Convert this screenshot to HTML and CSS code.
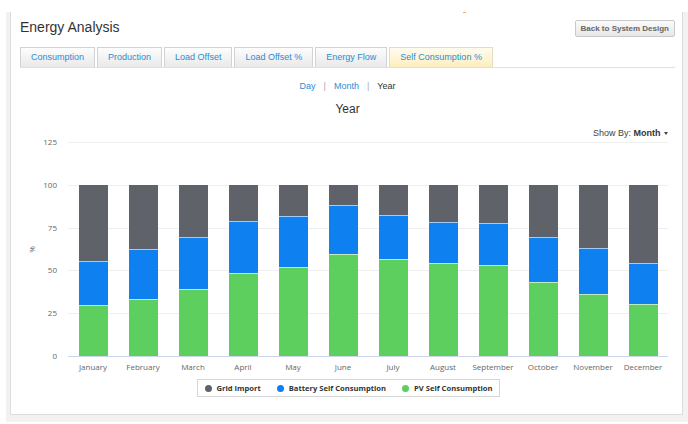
FILE: index.html
```html
<!DOCTYPE html>
<html>
<head>
<meta charset="utf-8">
<title>Energy Analysis</title>
<link rel="stylesheet" href="styles.css">
</head>
<body>
<div class="outer">
  <div class="panel">
    <span class="mark"></span>
    <div class="header">
      <h1 class="title">Energy Analysis</h1>
      <button class="back-btn">Back to System Design</button>
    </div>
    <div class="tabs">
      <a class="tab">Consumption</a>
      <a class="tab">Production</a>
      <a class="tab">Load Offset</a>
      <a class="tab">Load Offset %</a>
      <a class="tab">Energy Flow</a>
      <a class="tab active">Self Consumption %</a>
    </div>
    <div class="periods">
      <a class="period">Day</a><span class="sep">|</span><a class="period">Month</a><span class="sep">|</span><span class="period current">Year</span>
    </div>
    <div class="chart-title">Year</div>
    <div class="showby">Show By: <b>Month</b> <span class="caret"></span></div>
    <div class="chart">
      <div class="yaxis">
        <div class="ytitle">%</div>
        <div class="ylabels">
          <span>125</span><span>100</span><span>75</span><span>50</span><span>25</span><span>0</span>
        </div>
      </div>
      <div class="plotcol">
        <div class="plot">
          <div class="gridlines"><i></i><i></i><i></i><i></i><i></i></div>
          <div class="bars">
            <div class="col"><div class="bar"><div class="seg grid" style="height:35.3%"></div><div class="seg batt" style="height:20.4%"></div><div class="seg pv" style="height:24%"></div></div></div>
            <div class="col"><div class="bar"><div class="seg grid" style="height:30.08%"></div><div class="seg batt" style="height:23.28%"></div><div class="seg pv" style="height:26.64%"></div></div></div>
            <div class="col"><div class="bar"><div class="seg grid" style="height:24.16%"></div><div class="seg batt" style="height:24.48%"></div><div class="seg pv" style="height:31.36%"></div></div></div>
            <div class="col"><div class="bar"><div class="seg grid" style="height:16.8%"></div><div class="seg batt" style="height:24.56%"></div><div class="seg pv" style="height:38.64%"></div></div></div>
            <div class="col"><div class="bar"><div class="seg grid" style="height:14.56%"></div><div class="seg batt" style="height:23.84%"></div><div class="seg pv" style="height:41.6%"></div></div></div>
            <div class="col"><div class="bar"><div class="seg grid" style="height:9.44%"></div><div class="seg batt" style="height:22.88%"></div><div class="seg pv" style="height:47.68%"></div></div></div>
            <div class="col"><div class="bar"><div class="seg grid" style="height:14.08%"></div><div class="seg batt" style="height:20.56%"></div><div class="seg pv" style="height:45.36%"></div></div></div>
            <div class="col"><div class="bar"><div class="seg grid" style="height:17.36%"></div><div class="seg batt" style="height:19.2%"></div><div class="seg pv" style="height:43.44%"></div></div></div>
            <div class="col"><div class="bar"><div class="seg grid" style="height:17.84%"></div><div class="seg batt" style="height:19.6%"></div><div class="seg pv" style="height:42.56%"></div></div></div>
            <div class="col"><div class="bar"><div class="seg grid" style="height:24.4%"></div><div class="seg batt" style="height:20.88%"></div><div class="seg pv" style="height:34.72%"></div></div></div>
            <div class="col"><div class="bar"><div class="seg grid" style="height:29.52%"></div><div class="seg batt" style="height:21.68%"></div><div class="seg pv" style="height:28.8%"></div></div></div>
            <div class="col"><div class="bar"><div class="seg grid" style="height:36.56%"></div><div class="seg batt" style="height:19.28%"></div><div class="seg pv" style="height:24.16%"></div></div></div>
          </div>
        </div>
        <div class="xlabels">
          <span>January</span><span>February</span><span>March</span><span>April</span><span>May</span><span>June</span><span>July</span><span>August</span><span>September</span><span>October</span><span>November</span><span>December</span>
        </div>
      </div>
    </div>
    <div class="legend-row">
      <div class="legend">
        <span class="item"><i class="dot grid"></i>Grid Import</span>
        <span class="item"><i class="dot batt"></i>Battery Self Consumption</span>
        <span class="item"><i class="dot pv"></i>PV Self Consumption</span>
      </div>
    </div>
  </div>
</div>
</body>
</html>
```

FILE: styles.css
```css
* { box-sizing: border-box; }
html, body { margin: 0; padding: 0; background: #ffffff; }
body {
  font-family: "Liberation Sans", Arial, sans-serif;
  color: #333333;
  width: 688px;
  height: 424px;
  overflow: hidden;
}
.outer {
  margin: 12px 0 0 6px;
  padding: 0 5px 7px 4px;
  background: #f2f2f2;
}
.panel {
  position: relative;
  height: 403px;
  background: #ffffff;
  border: 1px solid #dcdcdc;
  border-top: 0;
  padding: 8px 7px 0 9px;
}
.mark {
  position: absolute;
  left: 452px;
  top: 0;
  width: 3px;
  height: 1px;
  background: #f0b060;
}
.header {
  display: flex;
  justify-content: space-between;
  align-items: flex-start;
  height: 17px;
}
.title {
  margin: -1px 0 0 0;
  font-size: 14px;
  line-height: 17px;
  font-weight: normal;
  color: #333333;
}
.back-btn {
  height: 17px;
  margin: 0;
  padding: 0 5px;
  font-family: "Liberation Sans", Arial, sans-serif;
  font-size: 8px;
  font-weight: bold;
  color: #666666;
  background: linear-gradient(#fbfbfb, #e7e7e7);
  border: 1px solid #c9c9c9;
  border-radius: 2px;
  line-height: 15px;
}
.tabs {
  display: flex;
  margin-top: 10px;
  border-bottom: 1px solid #e0e0e0;
}
.tab {
  height: 20px;
  margin-right: 2px;
  padding: 0 10px;
  font-size: 9px;
  line-height: 19px;
  color: #2a8dd4;
  background: linear-gradient(#fdfdfd, #e9e9e9);
  border: 1px solid #d2d2d2;
  border-bottom: 0;
}
.tab.active {
  background: linear-gradient(#fffcf0, #fdeebf);
  border-color: #e6dcc0;
}
.periods {
  margin-top: 12px;
  text-align: center;
  font-size: 9px;
  line-height: 12px;
}
.period { color: #2a8dd4; }
.period.current { color: #333333; }
.sep {
  color: #aaaaaa;
  margin: 0 8px;
}
.chart-title {
  margin-top: 10px;
  text-align: center;
  font-size: 12px;
  line-height: 14px;
  color: #333333;
}
.showby {
  margin-top: 11px;
  padding-right: 7px;
  text-align: right;
  font-size: 9px;
  line-height: 12px;
  color: #444444;
}
.showby b { color: #333333; }
.caret {
  display: inline-block;
  width: 0;
  height: 0;
  border-left: 2.5px solid transparent;
  border-right: 2.5px solid transparent;
  border-top: 3px solid #444444;
  vertical-align: middle;
  margin-left: 1px;
}
.chart {
  display: flex;
  margin-top: 3px;
  font-family: "Open Sans", "DejaVu Sans", sans-serif;
}
.yaxis {
  width: 48px;
  height: 214px;
  display: flex;
  align-items: center;
}
.ytitle {
  width: 26px;
  text-align: center;
  font-size: 8px;
  color: #666666;
  transform: rotate(-90deg);
}
.ylabels {
  height: 224px;
  margin: -5px 0;
  margin-left: auto;
  padding-right: 11px;
  display: flex;
  flex-direction: column;
  justify-content: space-between;
  align-items: flex-end;
  font-size: 8px;
  line-height: 10px;
  color: #666666;
}
.plotcol { width: 600px; }
.plot {
  display: grid;
  height: 215px;
  border-bottom: 1px solid #ccd6eb;
}
.plot > * { grid-area: 1 / 1; }
.gridlines {
  display: flex;
  flex-direction: column;
  height: 214px;
}
.gridlines i {
  flex: 1;
  border-top: 1px solid #efefef;
}
.bars {
  display: flex;
  height: 214px;
}
.col {
  width: 50px;
  height: 100%;
  display: flex;
  justify-content: center;
}
.bar {
  width: 29px;
  height: 100%;
  display: flex;
  flex-direction: column;
  justify-content: flex-end;
}
.seg { flex: none; }
.seg + .seg { border-top: 1px solid rgba(255,255,255,0.6); }
.grid { background: #5f6269; }
.batt { background: #0f80f0; }
.pv { background: #5ccf5e; }
.xlabels {
  display: flex;
  margin-top: 5px;
  font-size: 8px;
  line-height: 10px;
  color: #666666;
}
.xlabels span {
  width: 50px;
  text-align: center;
  white-space: nowrap;
}
.legend-row {
  display: flex;
  justify-content: center;
  margin-top: 7px;
  padding-left: 1px;
}
.legend {
  display: flex;
  align-items: center;
  height: 18px;
  padding: 0 6px 0 7px;
  border: 1px solid #d6d6d6;
  font-family: "Open Sans", "DejaVu Sans", sans-serif;
  font-size: 7.6px;
  font-weight: bold;
  color: #333333;
  gap: 16px;
}
.item {
  display: flex;
  align-items: center;
  white-space: nowrap;
}
.dot {
  width: 7px;
  height: 7px;
  border-radius: 50%;
  margin-right: 5px;
}
```
